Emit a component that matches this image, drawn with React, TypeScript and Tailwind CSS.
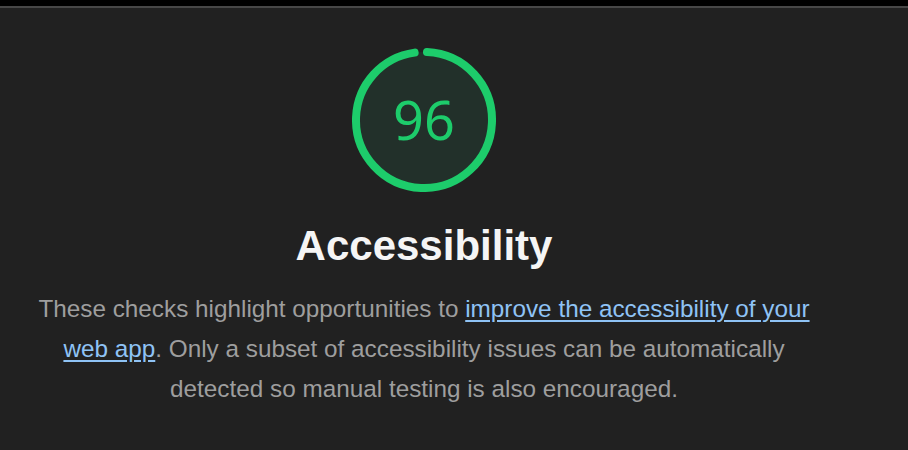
const SCORE = 96;
const R = 68;
const CIRC = 2 * Math.PI * R;

function Gauge({ score }: { score: number }) {
  const arc = (349 / 360) * CIRC * (score / 96);
  return (
    <div className="relative size-[144px]">
      <svg viewBox="0 0 144 144" className="absolute inset-0 size-full">
        <circle cx="72" cy="72" r={R} fill="#22302a" />
        <circle
          cx="72"
          cy="72"
          r={R}
          fill="none"
          stroke="#1dcc6b"
          strokeWidth="8"
          strokeLinecap="round"
          strokeDasharray={`${arc} ${CIRC}`}
          transform="rotate(-87.5 72 72)"
        />
      </svg>
      <div className="absolute inset-0 flex items-center justify-center pb-[2px] font-['Noto_Sans',sans-serif] text-[54px] leading-none text-[#1dcc6b]">
        {score}
      </div>
    </div>
  );
}

export default function App() {
  return (
    <div className="h-[450px] w-[908px] overflow-hidden bg-[#212121] font-['Liberation_Sans',Arial,sans-serif]">
      <div className="h-[6px] bg-black" />
      <div className="h-[2px] bg-[#474747]" />

      <div className="flex flex-col items-center pr-[60px] pt-[40px]">
        <Gauge score={SCORE} />

        <h1 className="mt-[30px] text-[42px] font-bold leading-[48px] text-[#f5f5f5]">Accessibility</h1>

        <p className="mt-[19px] w-[798px] text-center text-[24.3px] leading-[40px] text-[#9e9e9e]">
          These checks highlight opportunities to{' '}
          <a href="#" className="text-[#8fc3f5] underline underline-offset-[3px]">
            improve the accessibility of your web app
          </a>
          . Only a subset of accessibility issues can be automatically detected so manual testing is also encouraged.
        </p>
      </div>
    </div>
  );
}
